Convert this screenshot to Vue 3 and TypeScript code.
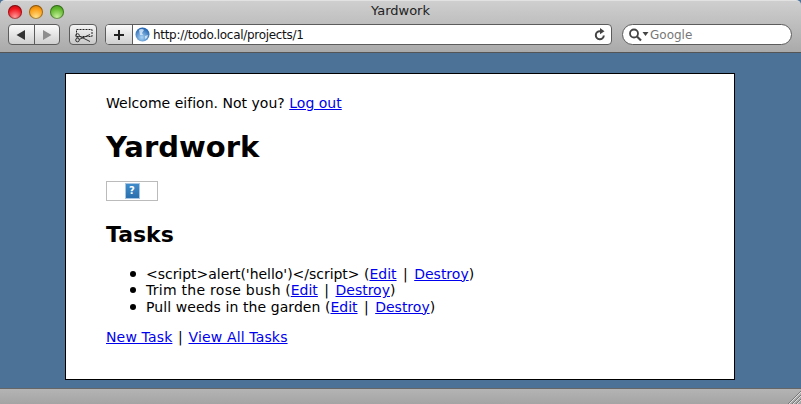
<script setup lang="ts">
interface Task { name: string; tracking: string }
const tasks: Task[] = [
  { name: "<script>alert('hello')<\/script>", tracking: '-0.03px' },
  { name: 'Trim the rose bush', tracking: '0.27px' },
  { name: 'Pull weeds in the garden', tracking: '0.08px' },
]
</script>

<template>
  <div class="window">
    <header class="chrome">
      <div class="titlebar">
        <div class="lights">
          <span class="light red"></span>
          <span class="light amber"></span>
          <span class="light green"></span>
        </div>
        <div class="title">Yardwork</div>
      </div>
      <div class="toolbar">
        <div class="btn-group">
          <button class="btn nav">
            <svg width="12" height="12" viewBox="0 0 12 12"><path d="M1.500 6 10 1v10z" fill="#333" /></svg>
          </button>
          <button class="btn nav right">
            <svg width="12" height="12" viewBox="0 0 12 12"><path d="M10.500 6 2 1v10z" fill="#8e8e8e" /></svg>
          </button>
        </div>
        <button class="btn clip">
          <svg width="20" height="16" viewBox="0 0 20 16" fill="none">
            <rect x="3.500" y="2.500" width="15.500" height="7" stroke="#222" stroke-dasharray="2 1" />
            <path d="M6 9 17 14.500M6 12.500 17 7.500" stroke="#333" />
            <circle cx="4.500" cy="8.500" r="1.800" stroke="#333" />
            <circle cx="4.500" cy="13" r="1.800" stroke="#333" />
          </svg>
        </button>
        <div class="address">
          <button class="add">
            <svg width="12" height="12" viewBox="0 0 12 12"><path d="M6 1v10M1 6h10" stroke="#222" stroke-width="2" /></svg>
          </button>
          <div class="url">
            <svg class="globe" width="15" height="15" viewBox="0 0 15 15">
              <defs>
                <radialGradient id="g" cx="0.45" cy="0.7" r="0.7">
                  <stop offset="0" stop-color="#a9d4f5" />
                  <stop offset="1" stop-color="#1c5fae" />
                </radialGradient>
              </defs>
              <circle cx="7.500" cy="7.500" r="7" fill="url(#g)" />
              <path d="M4 3c2-1.500 4-1 5 0L7 6 8 8 5 8zM10 9l3-1-1 3-2 1z" fill="#e8f2fb" opacity=".75" />
            </svg>
            <span class="url-text">http://todo.local/projects/1</span>
            <svg class="reload" width="12" height="13" viewBox="0 0 12 13" fill="none">
              <path d="M9.800 7.500A4 4 0 1 1 6 3.200" stroke="#444" stroke-width="2" />
              <path d="M6 0l4.500 3.200L6 6.200z" fill="#444" />
            </svg>
          </div>
        </div>
        <div class="search">
          <svg width="21" height="14" viewBox="0 0 21 14" fill="none">
            <circle cx="6" cy="5.500" r="4" stroke="#444" stroke-width="1.800" />
            <path d="M9 8.500 13 12.500" stroke="#444" stroke-width="2.200" />
            <path d="M14.500 4h6l-3 4z" fill="#444" />
          </svg>
          <span class="search-text">Google</span>
        </div>
      </div>
    </header>

    <main class="desktop">
      <section class="page">
        <p class="welcome">Welcome eifion. Not you? <a href="#">Log out</a></p>
        <h1>Yardwork</h1>
        <div class="broken"><span class="broken-icon">?</span></div>
        <h2>Tasks</h2>
        <ul>
          <li v-for="task in tasks" :key="task.name"><span :style="{ letterSpacing: task.tracking }">{{ task.name }}</span> (<a href="#">Edit</a><span class="sep"> | </span><a href="#">Destroy</a>)</li>
        </ul>
        <p class="links"><a href="#">New Task</a><span class="sep"> | </span><a href="#">View All Tasks</a></p>
      </section>
    </main>

    <footer class="status">
      <svg class="grip" width="14" height="14" viewBox="0 0 14 14" fill="none">
        <path d="M1 14 14 1M5 14 14 5M9 14l5-5" stroke="#777" />
        <path d="M2 14 14 2M6 14l8-8M10 14l4-4" stroke="#ddd" />
      </svg>
    </footer>
  </div>
</template>

<style>
html, body { margin: 0; padding: 0; background: #4c7297; overflow: hidden; }
</style>

<style scoped>
.window {
  width: 801px;
  height: 404px;
  display: flex;
  flex-direction: column;
  overflow: hidden;
  font-family: "DejaVu Sans", Verdana, sans-serif;
  background: #4c7297;
}
.chrome {
  height: 53px;
  flex: none;
  box-sizing: border-box;
  border-top: 1px solid #e2e2e2;
  border-bottom: 1px solid #555;
  border-radius: 5px 5px 0 0;
  background: linear-gradient(#cfcfcf, #aaa);
}
.titlebar {
  height: 23px;
  position: relative;
  display: flex;
  align-items: center;
  justify-content: center;
}
.title {
  font: 13px/16px "DejaVu Sans", sans-serif;
  color: #222;
  margin-top: -4px;
}
.lights {
  position: absolute;
  left: 8px;
  top: 4px;
  display: flex;
  gap: 7px;
}
.light {
  width: 14px;
  height: 14px;
  border-radius: 50%;
  box-shadow: inset 0 0 0 1px rgba(0, 0, 0, .35);
}
.red { background: radial-gradient(circle at 50% 85%, #ff9a9a, #f0141c 60%, #a00c12); }
.amber { background: radial-gradient(circle at 50% 85%, #ffe08a, #fb9c12 60%, #b86a08); }
.green { background: radial-gradient(circle at 50% 85%, #c4f09a, #62b82f 60%, #3c8a1c); }
.toolbar {
  display: flex;
  align-items: flex-start;
  height: 22px;
  padding: 0 9px 0 8px;
}
.btn-group {
  display: flex;
  width: 52px;
  height: 21px;
  box-sizing: border-box;
  border: 1px solid #5c5c5c;
  border-radius: 4px;
  overflow: hidden;
  background: linear-gradient(#fbfbfb, #cfcfcf);
}
.btn {
  padding: 0;
  border: 0;
  display: flex;
  align-items: center;
  justify-content: center;
  background: transparent;
}
.nav { flex: 1; }
.nav.right { border-left: 1px solid #5c5c5c; }
.clip {
  width: 28px;
  height: 21px;
  margin-left: 9px;
  box-sizing: border-box;
  border: 1px solid #5c5c5c;
  border-radius: 4px;
  background: linear-gradient(#f5f5f5, #c8c8c8);
}
.address {
  display: flex;
  width: 507px;
  height: 21px;
  margin-left: 8px;
  box-sizing: border-box;
  border: 1px solid #5c5c5c;
  border-radius: 4px;
  overflow: hidden;
  background: #fff;
}
.add {
  width: 27px;
  flex: none;
  padding: 0;
  border: 0;
  border-right: 1px solid #5c5c5c;
  display: flex;
  align-items: center;
  justify-content: center;
  background: linear-gradient(#fbfbfb, #cfcfcf);
}
.url {
  flex: 1;
  display: flex;
  align-items: center;
  padding: 0 5px 0 2px;
}
.globe { flex: none; }
.url-text {
  flex: 1;
  margin-left: 3px;
  font: 12px/16px "DejaVu Sans", Verdana, sans-serif;
  letter-spacing: -.3px;
  color: #111;
}
.reload { flex: none; }
.search {
  width: 170px;
  height: 21px;
  margin-left: 10px;
  box-sizing: border-box;
  border: 1px solid #5c5c5c;
  border-radius: 11px;
  background: #fff;
  display: flex;
  align-items: center;
  padding-left: 5px;
  gap: 1px;
}
.search-text {
  font: 12px/16px "DejaVu Sans", Verdana, sans-serif;
  color: #777;
}
.desktop {
  flex: 1;
  min-height: 0;
  padding: 20px 66px 8px 65px;
}
.page {
  box-sizing: border-box;
  height: 307px;
  border: 1px solid #000;
  background: #fff;
  padding: 21px 40px 0;
  color: #000;
  font-size: 14px;
  line-height: 16.500px;
}
p { margin: 0; }
a { color: #00e; text-decoration: underline; }
.welcome { letter-spacing: .02px; }
h1 {
  margin: 19px 0 0;
  font-size: 29px;
  line-height: 33px;
  font-weight: 700;
}
.broken {
  width: 52px;
  height: 20px;
  margin-top: 17px;
  box-sizing: border-box;
  border: 1px solid #bbb;
  display: flex;
  align-items: center;
  justify-content: center;
}
.broken-icon {
  width: 15px;
  height: 16px;
  box-sizing: border-box;
  border: 1px solid #a9c6e2;
  background: linear-gradient(#3f8cca, #2a6fae);
  color: #fff;
  font: 700 10px/14px "DejaVu Sans", sans-serif;
  text-align: center;
}
h2 {
  margin: 21px 0 0;
  font-size: 22px;
  line-height: 25px;
  font-weight: 700;
}
ul {
  margin: 19px 0 0;
  padding: 0 0 0 40px;
  list-style: none;
}
li { position: relative; }
li::before {
  content: "";
  position: absolute;
  left: -16px;
  top: 5px;
  width: 6px;
  height: 6px;
  border-radius: 50%;
  background: #000;
}
ul .sep { margin: 0 2px; }
.links { margin-top: 14px; letter-spacing: .15px; }
.links .sep { margin: 0 1px; }
.status {
  height: 16px;
  flex: none;
  box-sizing: border-box;
  border-top: 1px solid #666;
  background: linear-gradient(#b4b4b4, #a4a4a4);
  display: flex;
  justify-content: flex-end;
  align-items: flex-end;
}
.grip { display: block; }
</style>
